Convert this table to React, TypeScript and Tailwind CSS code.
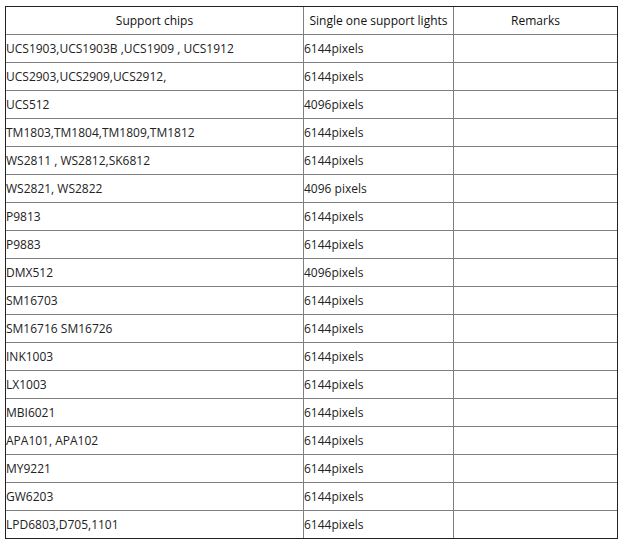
import React from "react";

const rows: [string, string][] = [
  ["UCS1903,UCS1903B ,UCS1909 , UCS1912", "6144pixels"],
  ["UCS2903,UCS2909,UCS2912,", "6144pixels"],
  ["UCS512", "4096pixels"],
  ["TM1803,TM1804,TM1809,TM1812", "6144pixels"],
  ["WS2811 , WS2812,SK6812", "6144pixels"],
  ["WS2821, WS2822", "4096 pixels"],
  ["P9813", "6144pixels"],
  ["P9883", "6144pixels"],
  ["DMX512", "4096pixels"],
  ["SM16703", "6144pixels"],
  ["SM16716 SM16726", "6144pixels"],
  ["INK1003", "6144pixels"],
  ["LX1003", "6144pixels"],
  ["MBI6021", "6144pixels"],
  ["APA101, APA102", "6144pixels"],
  ["MY9221", "6144pixels"],
  ["GW6203", "6144pixels"],
  ["LPD6803,D705,1101", "6144pixels"],
];

export default function App() {
  return (
    <div
      className="w-[629px] h-[546px] bg-white pt-[6px] pl-[5px] text-[12px] text-[#222]"
      style={{ fontFamily: '"Open Sans", "Liberation Sans", sans-serif' }}
    >
      <div className="w-[613px] border border-[#222]">
        <div className="grid grid-cols-[297px_150px_164px] h-[27px] text-[#111]">
          <div className="flex items-center justify-center">Support chips</div>
          <div className="flex items-center justify-center border-l border-[#808080]">
            Single one support lights
          </div>
          <div className="flex items-center justify-center border-l border-[#808080]">Remarks</div>
        </div>
        {rows.map(([a, b], i) => (
          <div key={i} className="grid grid-cols-[297px_150px_164px] h-[28px] border-t border-[#808080]">
            <div className="flex items-center whitespace-nowrap">{a}</div>
            <div className="flex items-center border-l border-[#808080] whitespace-nowrap">{b}</div>
            <div className="border-l border-[#808080]"></div>
          </div>
        ))}
      </div>
    </div>
  );
}
